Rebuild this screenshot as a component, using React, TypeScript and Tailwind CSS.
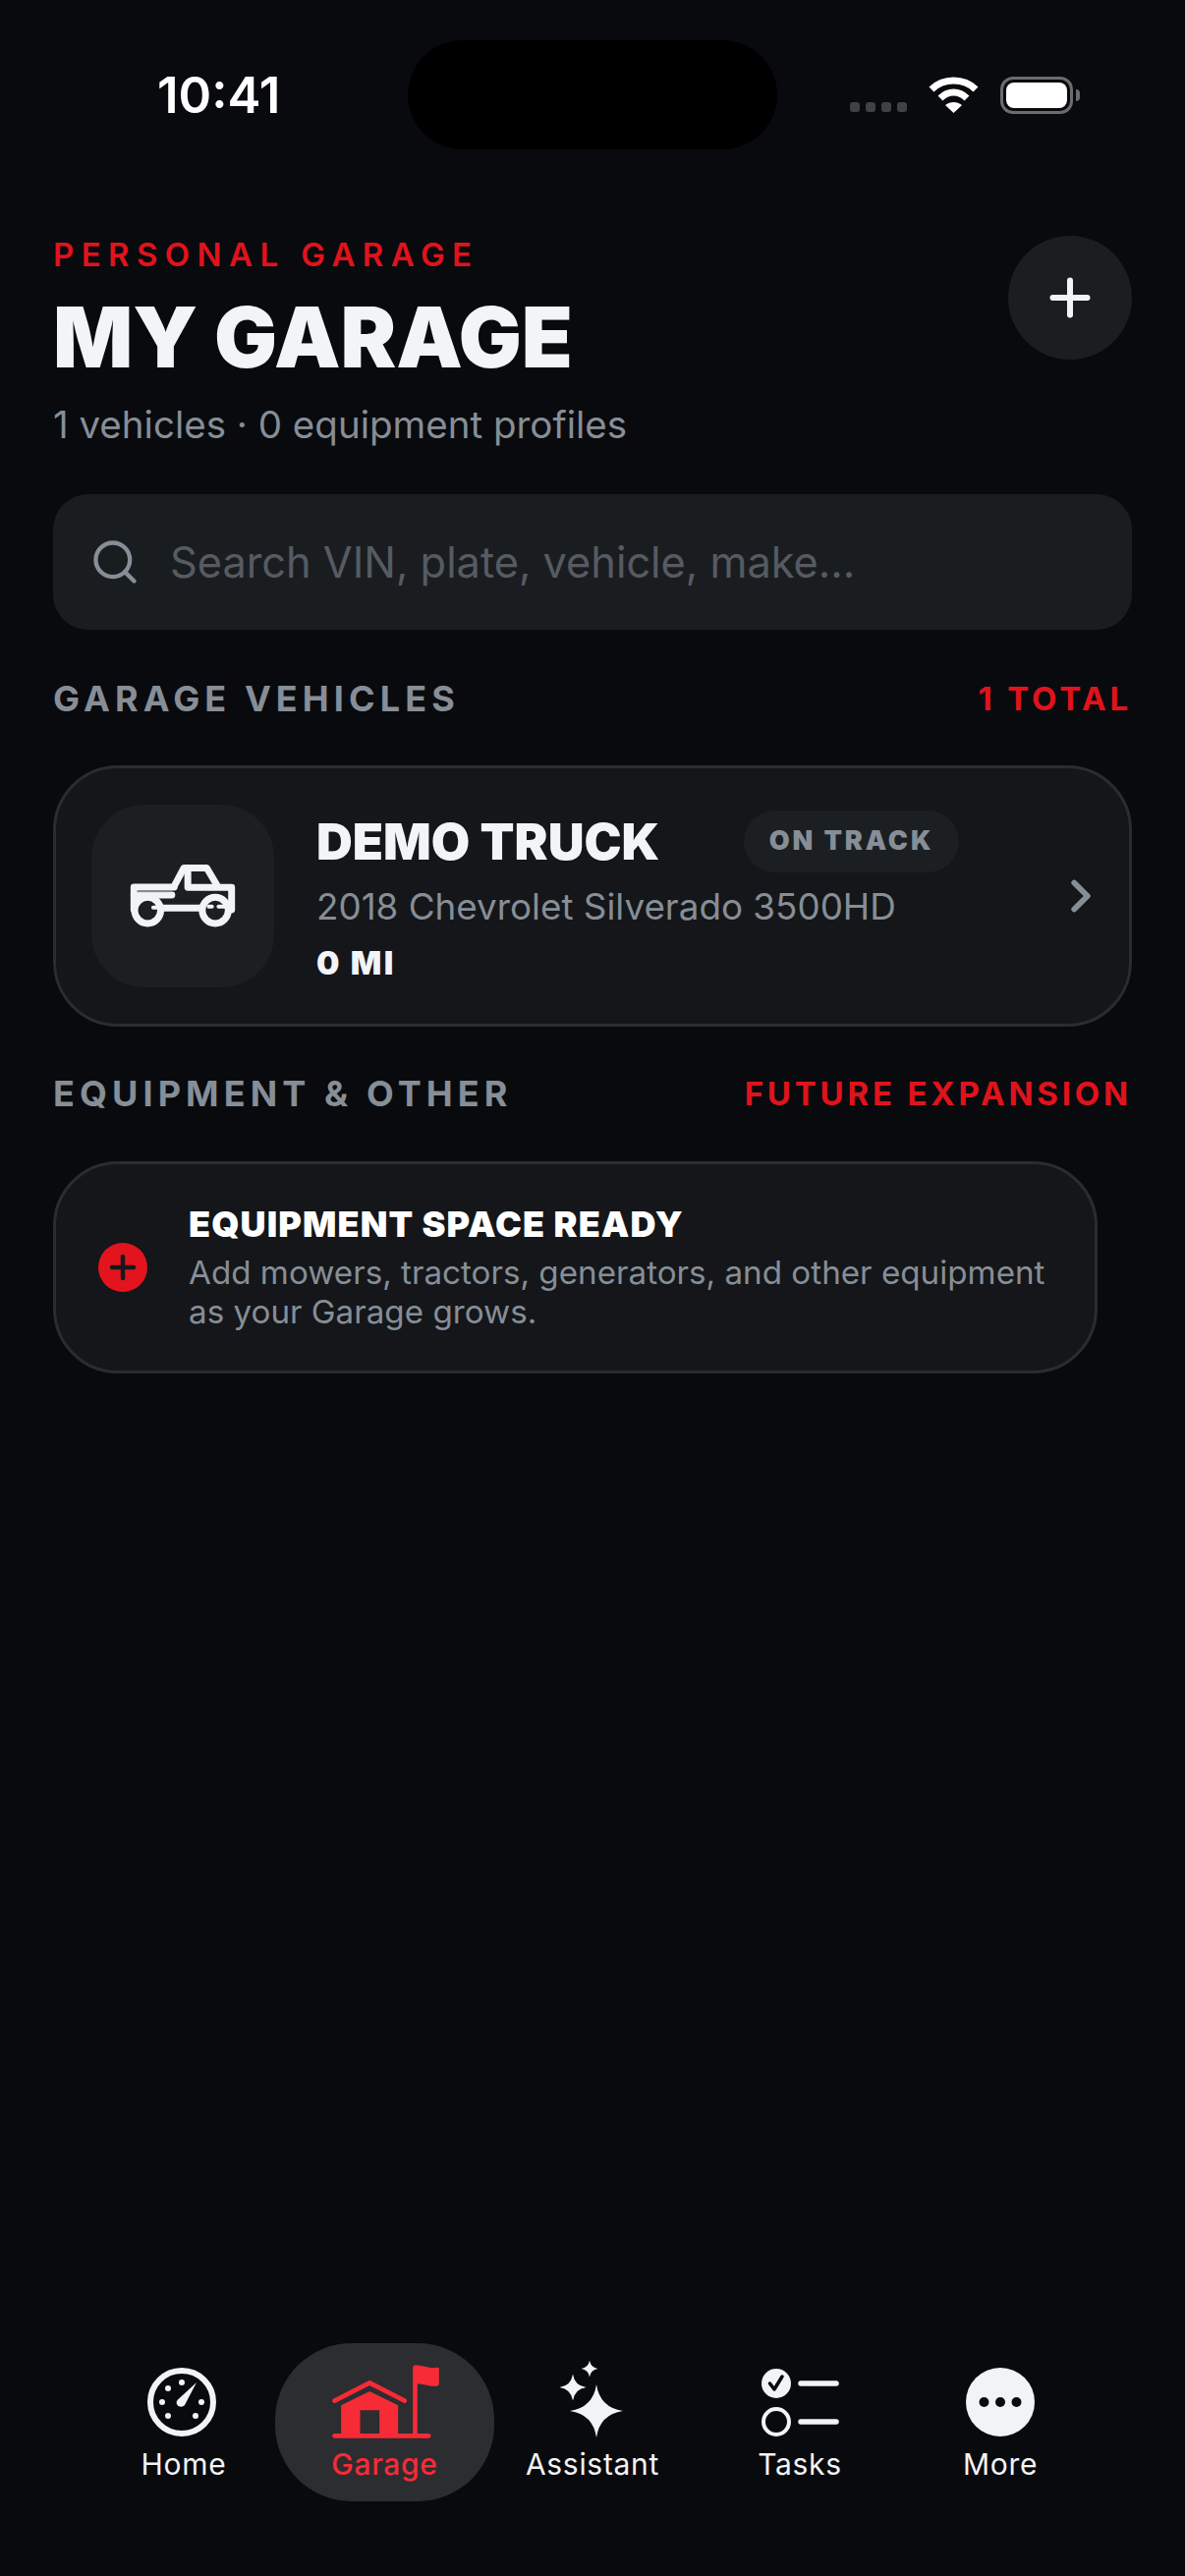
import { ChevronRight, Plus, Search } from 'lucide-react';

const sparkle = (x: number, y: number, r: number) => {
  const c = r * 0.13;
  return `M${x} ${y - r}Q${x + c} ${y - c} ${x + r} ${y}Q${x + c} ${y + c} ${x} ${y + r}Q${x - c} ${y + c} ${x - r} ${y}Q${x - c} ${y - c} ${x} ${y - r}Z`;
};

function StatusBar() {
  return (
    <div className="flex items-center pt-[41px] pl-[160px]">
      <div className="w-[255px] text-[51px] leading-none font-semibold text-white">10:41</div>
      <div className="h-[111px] w-[376px] rounded-[56px] bg-black" />
      {/* Signal dots */}
      <div className="ml-[74px] mt-[24px] flex gap-[6px]">
        <span className="size-[10px] rounded-[3px] bg-[#3f4144]" />
        <span className="size-[10px] rounded-[3px] bg-[#3f4144]" />
        <span className="size-[10px] rounded-[3px] bg-[#3f4144]" />
        <span className="size-[10px] rounded-[3px] bg-[#3f4144]" />
      </div>
      <svg className="ml-[22px]" width="51" height="38" viewBox="0 0 51 38" fill="none">
        <path d="M3 13C15 1 36 1 48 13" stroke="#fff" strokeWidth="7" />
        <path d="M12 22C20 14 31 14 39 22" stroke="#fff" strokeWidth="7" />
        <path d="M25.5 37L17 29C22 25 29 25 34 29Z" fill="#fff" />
      </svg>
      <div className="ml-[22px] flex items-center">
        <div className="h-[38px] w-[74px] rounded-[13px] border-[3px] border-[#6b6c6e] p-[3px]">
          <div className="h-full w-full rounded-[8px] bg-white" />
        </div>
        <div className="ml-[3px] h-[12px] w-[4px] rounded-r-full bg-[#6b6c6e]" />
      </div>
    </div>
  );
}

function SectionHeader({ title, note }: { title: string; note: string }) {
  return (
    <div className="flex items-center justify-between">
      <span className="text-[36px] leading-[44px] font-bold tracking-[5.1px] text-[#868e97]">{title}</span>
      <span className="text-[33px] leading-[44px] font-bold tracking-[3.8px] text-[#e0131d]">{note}</span>
    </div>
  );
}

function TruckIcon() {
  return (
    <svg width="113" height="72" viewBox="120 200 340 216" fill="none" stroke="#f1f3f7" strokeWidth="21" strokeLinecap="round" strokeLinejoin="round">
      <path d="M262 278L292 222H362L395 278" />
      <path d="M304 228V282H438V350" />
      <path d="M139 350V281H262" />
      <path d="M139 305H255" />
      <path d="M225 345H345" />
      <circle cx="181" cy="352" r="40" />
      <circle cx="388" cy="352" r="40" />
      <path d="M148 295H250" stroke="#8b8f95" strokeWidth="3" strokeLinecap="butt" />
      <path d="M198 343H210M368 340H378M398 340H420" strokeWidth="12" />
    </svg>
  );
}

function VehicleCard() {
  return (
    <div className="mt-[46px] flex h-[266px] items-center rounded-[66px] border-[3px] border-[#2a2c2f] bg-[#141619] pl-[36px] pr-[22px]">
      <div className="flex size-[186px] shrink-0 items-center justify-center rounded-[54px] bg-[#1b1f22]">
        <TruckIcon />
      </div>
      <div className="ml-[43px] flex-1">
        <div className="flex items-center">
          <span className="w-[435px] text-[51px] leading-[63px] font-black text-[#f2f4f8]">DEMO TRUCK</span>
          <span className="flex h-[63px] w-[219px] items-center justify-center rounded-full bg-[#1b1f22] text-[27px] font-black tracking-[2.9px] text-[#868e97]">
            ON TRACK
          </span>
        </div>
        <div className="mt-[11px] text-[36.8px] leading-[48px] text-[#868e97]">2018 Chevrolet Silverado 3500HD</div>
        <div className="mt-[13px] text-[33px] leading-[40px] font-black tracking-[2.4px] text-[#f2f4f8]">0 MI</div>
      </div>
      <ChevronRight size={54} strokeWidth={2.6} className="text-[#868e97]" />
    </div>
  );
}

function EquipmentCard() {
  return (
    <div className="mt-[47px] flex h-[216px] w-[1063px] items-center rounded-[66px] border-[3px] border-[#2a2c2f] bg-[#141619] pl-[43px]">
      <svg className="shrink-0" width="50" height="50" viewBox="0 0 50 50" fill="none">
        <circle cx="25" cy="25" r="25" fill="#e3141e" />
        <path d="M14 25H36M25 14V36" stroke="#16181b" strokeWidth="4.5" strokeLinecap="round" />
      </svg>
      <div className="ml-[42px]">
        <div className="text-[36px] leading-[42px] font-black tracking-[1.1px] text-white">EQUIPMENT SPACE READY</div>
        <p className="mt-[9px] text-[33.2px] leading-[39.5px] text-[#868e97]">
          Add mowers, tractors, generators, and other equipment
          <br />
          as your Garage grows.
        </p>
      </div>
    </div>
  );
}

function NavIcon({ name }: { name: string }) {
  if (name === 'Home') {
    return (
      <svg width="80" height="80" viewBox="2 0 80 80" fill="#f2f3f5">
        <circle cx="40" cy="42" r="32" fill="none" stroke="#f2f3f5" strokeWidth="6" />
        <circle cx="40" cy="22" r="3" />
        <circle cx="26" cy="28" r="3" />
        <circle cx="20" cy="42" r="3" />
        <circle cx="60" cy="42" r="3" />
        <circle cx="26" cy="56" r="3" />
        <circle cx="54" cy="56" r="3" />
        <path d="M55 22L43 45C41 47.500 37 47 35.500 45C34 43 34.500 41 36 39.500Z" />
      </svg>
    );
  }
  if (name === 'Garage') {
    return (
      <svg width="112" height="80" viewBox="765 129 335 240" fill="#f62b36">
        <path d="M778 251L885 196L992 251" fill="none" stroke="#f62b36" strokeWidth="14" strokeLinecap="round" strokeLinejoin="round" />
        <path d="M798 265L885 222L972 265V352H915V280H856V352H798Z" />
        <path d="M778 358H1065" stroke="#f62b36" strokeWidth="14" strokeLinecap="round" />
        <path d="M1017 150C1017 144 1022 142 1028 142C1050 144 1070 154 1092 149C1095 149 1097 150 1097 153V198C1097 203 1094 206 1090 206C1070 209 1050 199 1031 199V352H1017Z" />
      </svg>
    );
  }
  if (name === 'Assistant') {
    return (
      <svg width="68" height="80" viewBox="0 0 68 80" fill="#f2f3f5">
        <path d={sparkle(38, 51, 27)} />
        <path d={sparkle(14, 27, 13.500)} />
        <path d={sparkle(31, 8, 8.500)} />
      </svg>
    );
  }
  if (name === 'Tasks') {
    return (
      <svg width="80" height="80" viewBox="0 0 80 80" fill="none">
        <circle cx="16" cy="23" r="15" fill="#f2f3f5" />
        <path d="M9.500 23L14 29L22 16" stroke="#090a0d" strokeWidth="3.500" strokeLinecap="round" strokeLinejoin="round" />
        <circle cx="16" cy="62" r="13" stroke="#f2f3f5" strokeWidth="4" />
        <path d="M41 23H77M41 62H77" stroke="#f2f3f5" strokeWidth="5.500" strokeLinecap="round" />
      </svg>
    );
  }
  return (
    <svg width="80" height="80" viewBox="0 0 80 80" fill="#090a0d">
      <circle cx="40" cy="42" r="35" fill="#f2f3f5" />
      <circle cx="23.500" cy="42" r="5" />
      <circle cx="40" cy="42" r="5" />
      <circle cx="56.500" cy="42" r="5" />
    </svg>
  );
}

const navItems = [
  { name: 'Home', width: 'w-[186px]' },
  { name: 'Garage', width: 'w-[223px]' },
  { name: 'Assistant', width: 'w-[200px]' },
  { name: 'Tasks', width: 'w-[222px]' },
  { name: 'More', width: 'w-[186px]' },
];

function BottomNav() {
  return (
    <div className="flex pb-[76px] pl-[94px]">
      {navItems.map((item) => {
        const active = item.name === 'Garage';
        return (
          <div
            key={item.name}
            className={`flex h-[161px] ${item.width} flex-col items-center pt-[18px] ${active ? 'rounded-[78px] bg-[#2c2d30]' : ''}`}
          >
            <NavIcon name={item.name} />
            <span
              className={`mt-[7px] text-[30px] leading-[36px] tracking-[0.7px] ${
                active ? 'font-medium text-[#f62b36]' : 'font-normal text-[#f2f3f5]'
              }`}
            >
              {item.name}
            </span>
          </div>
        );
      })}
    </div>
  );
}

export default function App() {
  return (
    <div className="flex h-[2622px] w-[1206px] flex-col bg-[#090a0d] font-[family-name:Inter,sans-serif]">
      <StatusBar />

      <div className="flex flex-1 flex-col px-[54px] pt-[87px]">
        {/* Header */}
        <div className="flex items-start justify-between">
          <div>
            <div className="text-[33px] leading-[40px] font-semibold tracking-[7.4px] text-[#e0131d]">PERSONAL GARAGE</div>
            <h1 className="mt-[17px] text-[85px] leading-[96px] font-black text-[#f2f4f8]">MY GARAGE</h1>
            <div className="mt-[16px] text-[38.5px] leading-[48px] text-[#868e97]">1 vehicles · 0 equipment profiles</div>
          </div>
          <div className="mt-[1px] flex size-[126px] items-center justify-center rounded-full bg-[#1b1e21]">
            <Plus size={60} strokeWidth={2.4} className="text-[#f2f4f8]" />
          </div>
        </div>

        {/* Search */}
        <div className="mt-[47px] flex h-[138px] items-center rounded-[36px] bg-[#1a1d20] pl-[37px]">
          <Search size={52} strokeWidth={2} className="text-[#868e97]" />
          <span className="ml-[30px] text-[43.3px] text-[#565b61]">Search VIN, plate, vehicle, make...</span>
        </div>

        <div className="mt-[48px]">
          <SectionHeader title="GARAGE VEHICLES" note="1 TOTAL" />
          <VehicleCard />
        </div>

        <div className="mt-[46px]">
          <SectionHeader title="EQUIPMENT & OTHER" note="FUTURE EXPANSION" />
          <EquipmentCard />
        </div>
      </div>

      <BottomNav />
    </div>
  );
}
